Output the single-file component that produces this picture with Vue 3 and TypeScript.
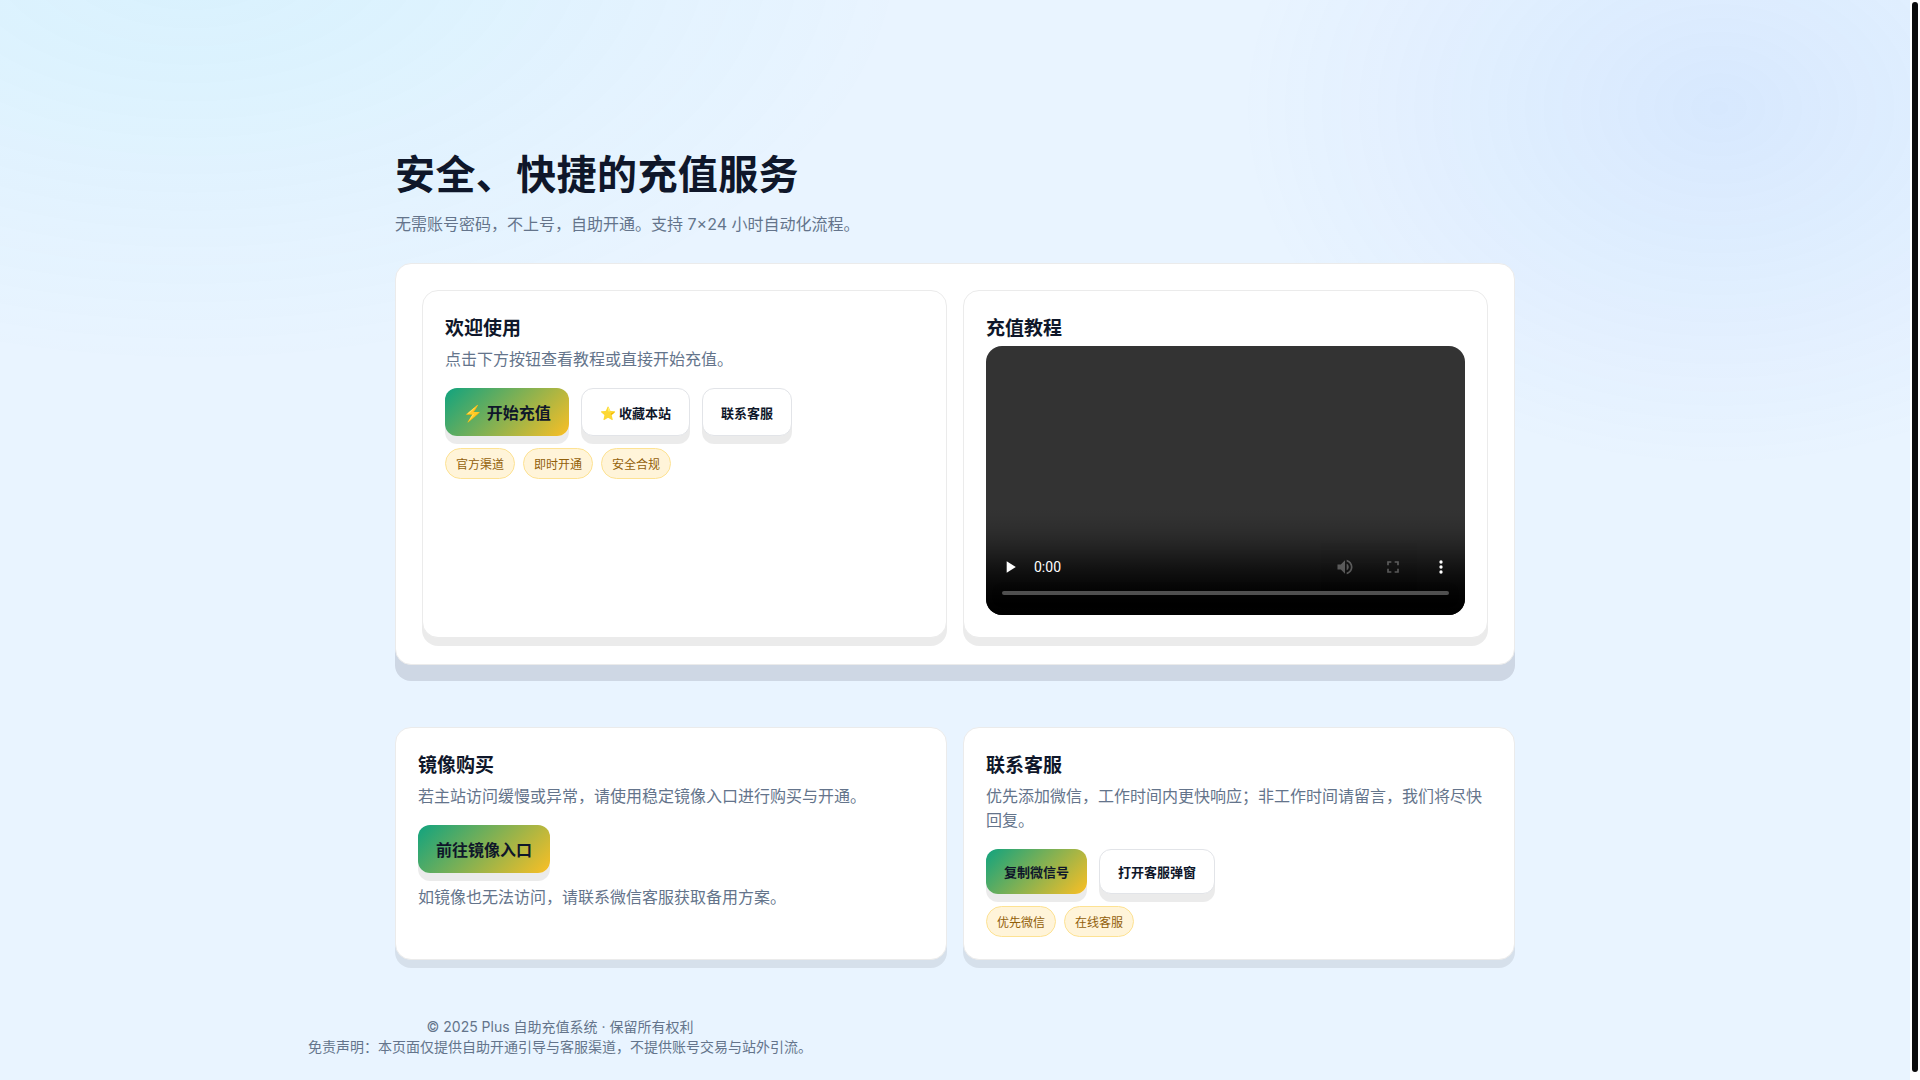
<script setup lang="ts">
const welcomeTags: string[] = ['官方渠道', '即时开通', '安全合规']
const contactTags: string[] = ['优先微信', '在线客服']
const tutorialSrc = 'tutorial.mp4'
</script>

<template>
  <div class="shell">
    <div class="page">
      <main class="container">
        <header class="hero">
          <h1>安全、快捷的充值服务</h1>
          <p>无需账号密码，不上号，自助开通。支持 7×24 小时自动化流程。</p>
        </header>

        <section class="panel">
          <article class="card">
            <h2>欢迎使用</h2>
            <p>点击下方按钮查看教程或直接开始充值。</p>
            <div class="actions">
              <a class="btn primary" href="#start">⚡ 开始充值</a>
              <button class="btn" type="button">⭐ 收藏本站</button>
              <button class="btn" type="button">联系客服</button>
            </div>
            <div class="tags">
              <span v-for="tag in welcomeTags" :key="tag" class="tag">{{ tag }}</span>
            </div>
          </article>
          <article class="card">
            <h2>充值教程</h2>
            <video class="video" :src="tutorialSrc" preload="none" controls></video>
          </article>
        </section>

        <section class="cards">
          <article class="card">
            <h2>镜像购买</h2>
            <p>若主站访问缓慢或异常，请使用稳定镜像入口进行购买与开通。</p>
            <div class="actions">
              <a class="btn primary" href="#mirror">前往镜像入口</a>
            </div>
            <p class="after">如镜像也无法访问，请联系微信客服获取备用方案。</p>
          </article>
          <article class="card">
            <h2>联系客服</h2>
            <p>优先添加微信，工作时间内更快响应；非工作时间请留言，我们将尽快回复。</p>
            <div class="actions">
              <button class="btn primary" type="button">复制微信号</button>
              <button class="btn" type="button">打开客服弹窗</button>
            </div>
            <div class="tags">
              <span v-for="tag in contactTags" :key="tag" class="tag">{{ tag }}</span>
            </div>
          </article>
        </section>
      </main>

      <footer class="footer">
        <div>
          <p>© 2025 Plus 自助充值系统 · 保留所有权利</p>
          <p>免责声明：本页面仅提供自助开通引导与客服渠道，不提供账号交易与站外引流。</p>
        </div>
      </footer>
    </div>
    <div class="rail" aria-hidden="true"><div class="thumb"></div></div>
  </div>
</template>

<style>
body {
  background: #ffffff;
}
</style>

<style scoped>
.shell {
  display: flex;
  min-height: 100vh;
  font-family: Inter, "Noto Sans CJK SC", sans-serif;
  font-size: 16px;
  line-height: 24px;
  color: #0f172a;
}

.shell *,
.shell {
  box-sizing: border-box;
}

h1,
h2,
p {
  margin: 0;
}

.page {
  flex: 1;
  min-width: 0;
  background:
    radial-gradient(1200px 700px at 10% -5%, rgba(34, 211, 238, 0.09), transparent 60%),
    radial-gradient(800px 600px at 90% 10%, rgba(59, 130, 246, 0.1), transparent 60%),
    #e9f4ff;
}

.container {
  max-width: 1168px;
  margin: 0 auto;
  padding: 145px 24px 0;
}

.hero h1 {
  font-size: 40px;
  line-height: 60px;
  font-weight: 700;
  letter-spacing: 0.01em;
}

.hero p {
  margin: 7px 0 27px;
  color: #64748b;
}

.panel {
  display: grid;
  grid-template-columns: 1fr 1fr;
  gap: 16px;
  padding: 26px;
  border: 1px solid #ebebeb;
  border-radius: 16px;
  background: #ffffff;
  box-shadow: 0 16px 0 rgba(15, 10, 30, 0.12);
}

.cards {
  display: grid;
  grid-template-columns: 1fr 1fr;
  gap: 16px;
  margin-top: 62px;
}

.card {
  padding: 22px;
  border: 1px solid #ebebeb;
  border-radius: 16px;
  background: #ffffff;
  box-shadow: 0 8px 0 rgba(0, 0, 0, 0.08);
}

.card h2 {
  margin-bottom: 1px;
  font-size: 19px;
  line-height: 32px;
  font-weight: 700;
}

.card p {
  margin-top: 2px;
  color: #64748b;
}

.video {
  display: block;
  width: 100%;
  aspect-ratio: 16 / 9;
  border-radius: 16px;
}

.actions {
  display: flex;
  gap: 12px;
  margin-top: 17px;
}

.btn {
  padding: 12px 18px;
  border: 1px solid #e2e4e8;
  border-radius: 12px;
  background: #ffffff;
  box-shadow: 0 8px 0 rgba(0, 0, 0, 0.08);
  color: #0f172a;
  font-family: inherit;
  font-size: 13px;
  font-weight: 700;
  text-decoration: none;
}

.btn.primary {
  border: 0;
  background: linear-gradient(135deg, #10a37f, #fbbf24);
}

a.btn {
  padding: 13px 18px 11px;
  font-size: 16px;
}

.tags {
  display: flex;
  gap: 8px;
  margin-top: 12px;
}

.tag {
  padding: 6px 10px 4px;
  border: 1px solid #fde293;
  border-radius: 16px;
  background: #fff4d9;
  color: #92600a;
  font-size: 12px;
  line-height: 19px;
}

.card .after {
  margin-top: 12px;
}

.footer {
  display: grid;
  grid-template-columns: 1fr 1fr;
  max-width: 1580px;
  margin: 0 auto;
  padding: 57px 0 23px;
  color: #64748b;
  font-size: 14px;
  line-height: 20px;
  text-align: center;
}

.rail {
  display: flex;
  width: 10px;
  padding: 2px 2px 8px;
  background: #ffffff;
}

.thumb {
  flex: 1;
  border-radius: 3px;
  background: #0b0b0b;
}
</style>
